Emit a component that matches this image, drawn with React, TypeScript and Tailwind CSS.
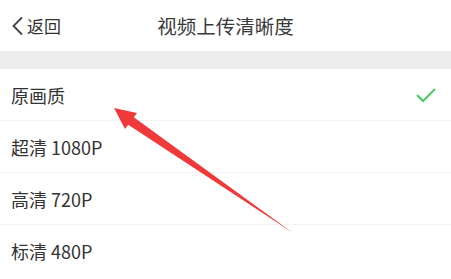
import React from 'react';

const options = ['原画质', '超清 1080P', '高清 720P', '标清 480P'];

const App: React.FC = () => {
  return (
    <div
      className="relative w-[451px] h-[279px] overflow-hidden bg-white text-[#333333]"
      style={{ fontFamily: '"Noto Sans CJK SC", "Noto Sans", sans-serif' }}
    >
      <div className="relative flex items-center h-[51px] bg-white">
        <div className="flex items-center pl-[9px]">
          <svg width="16" height="22" viewBox="0 0 16 22" className="mr-[2px]">
            <path d="M13 2.5 L4.5 11 L13 19.5" fill="none" stroke="#444" strokeWidth="1.8" />
          </svg>
          <span className="text-[17px] leading-none">返回</span>
        </div>
        <div className="absolute inset-0 flex items-center justify-center pointer-events-none">
          <span className="text-[19.5px] leading-none text-[#3a3a3a]">视频上传清晰度</span>
        </div>
      </div>
      <div className="h-[18px] bg-[#ececec]" />
      <div className="flex flex-col">
        {options.map((o, i) => (
          <div
            key={o}
            className={`flex items-center justify-between h-[52px] pl-[11px] pr-[14px] ${i < options.length - 1 ? 'border-b border-[#f2f2f2]' : ''}`}
          >
            <span className="text-[18px] leading-none">{o}</span>
            {i === 0 && (
              <svg width="22" height="16" viewBox="0 0 22 16">
                <path d="M2 8 L8 14 L20 2" fill="none" stroke="#4cc864" strokeWidth="2" />
              </svg>
            )}
          </div>
        ))}
      </div>
      <svg className="absolute left-0 top-0 pointer-events-none" width="451" height="279">
        <polygon
          points="114,108 137,113 133.8,117.2 293,233 128.2,124.8 125,129"
          fill="#f03a3a"
        />
      </svg>
    </div>
  );
};

export default App;
